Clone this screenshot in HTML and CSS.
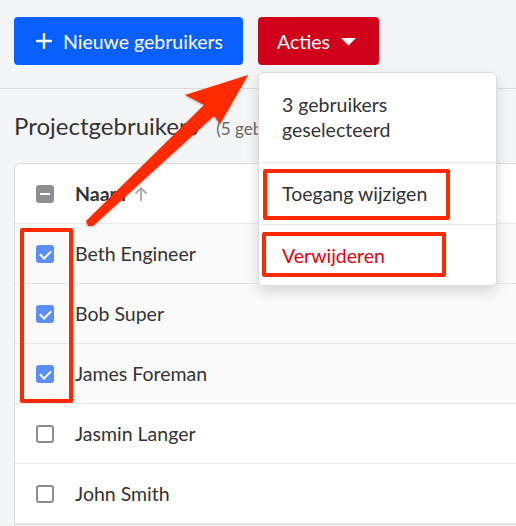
FILE: index.html
```html
<!DOCTYPE html>
<html lang="nl">
<head>
    <meta charset="UTF-8">
    <title>Projectgebruikers</title>
    <link rel="stylesheet" href="styles.css">
</head>
<body>

    <!-- toolbar -->
    <div class="toolbar">
        <button class="btn btn-primary">
            <svg class="plus" width="16" height="16" viewBox="0 0 16 16"><path d="M8 1v14M1 8h14" stroke="#fff" stroke-width="2.4" stroke-linecap="round"/></svg>
            Nieuwe gebruikers
        </button>
        <button class="btn btn-danger">
            Acties
            <svg class="caret" width="15" height="8" viewBox="0 0 15 8"><path d="M0 0h15L7.5 7.5z" fill="#fff"/></svg>
        </button>
    </div>

    <div class="content">
        <h2 class="title">Projectgebruikers <span class="count">(5 gebruikers)</span></h2>

        <div class="card">
            <div class="row row-head">
                <span class="check check-mixed"></span>
                <span class="name">Naam</span>
                <svg class="sort" width="14" height="16" viewBox="0 0 14 16"><path d="M7 15V2M1.5 7.5L7 2l5.5 5.5" stroke="#a8a8ad" stroke-width="1.8" fill="none"/></svg>
            </div>
            <div class="row selected"><span class="check checked"></span><span class="name">Beth Engineer</span></div>
            <div class="row selected"><span class="check checked"></span><span class="name">Bob Super</span></div>
            <div class="row selected"><span class="check checked"></span><span class="name">James Foreman</span></div>
            <div class="row"><span class="check"></span><span class="name">Jasmin Langer</span></div>
            <div class="row"><span class="check"></span><span class="name">John Smith</span></div>
        </div>
    </div>

    <!-- dropdown menu -->
    <div class="menu">
        <div class="menu-info">3 gebruikers geselecteerd</div>
        <div class="menu-item">Toegang wijzigen</div>
        <div class="menu-item menu-delete">Verwijderen</div>
    </div>

    <!-- annotations -->
    <div class="mark mark-checks"></div>
    <div class="mark mark-access"></div>
    <div class="mark mark-delete"></div>
    <svg class="arrow" width="516" height="526" viewBox="0 0 516 526">
        <polygon points="248,75 185,95 204,105 86,221 88,226 93,226 214,116 220,124" fill="#ff2a00"/>
    </svg>

</body>
</html>
```

FILE: styles.css
```css
* {
    margin: 0;
    padding: 0;
    box-sizing: border-box;
    font-family: Lato, "Open Sans", sans-serif;
}

body {
    background-color: #f4f5f7;
    color: #333;
    width: 516px;
    height: 526px;
    overflow: hidden;
    position: relative;
}

.toolbar {
    display: flex;
    gap: 15px;
    padding: 17px 14px 0;
    height: 89px;
    border-bottom: 1px solid #d9dadd;
}

.btn {
    height: 48px;
    border: none;
    border-radius: 4px;
    color: white;
    font-size: 19.5px;
    display: flex;
    align-items: center;
    cursor: pointer;
}

.btn-primary {
    background: #0a60ff;
    padding: 0 18px 0 22px;
    gap: 11px;
    width: 229px;
}

.btn-danger {
    background: #d0021b;
    padding: 0 20px 0 19px;
    gap: 11px;
    width: 121px;
}

.caret {
    margin-top: 1px;
}

.content {
    padding: 22px 0 0 14px;
}

.title {
    font-size: 24px;
    line-height: 29px;
    font-weight: normal;
    color: #333;
    height: 52px;
}

.count {
    font-size: 17px;
    color: #666;
    margin-left: 12px;
}

.card {
    background: white;
    border: 1px solid #dadada;
    border-right: none;
    border-radius: 6px 0 0 0;
    margin-right: -20px;
}

.row {
    height: 60px;
    display: flex;
    align-items: center;
    padding-left: 21px;
    border-bottom: 1px solid #e8e8e8;
}

.row.selected {
    background: #fafafa;
}

.check {
    width: 18px;
    height: 18px;
    border: 2px solid #8c8c91;
    border-radius: 3px;
    background: white;
    margin-right: 21px;
    position: relative;
}

.check.checked {
    background: #5b8ef8;
    border-color: #5b8ef8;
}

.check.checked::after {
    content: "";
    position: absolute;
    left: 4px;
    top: 1px;
    width: 5px;
    height: 9px;
    border: solid white;
    border-width: 0 2px 2px 0;
    transform: rotate(45deg);
}

.check-mixed {
    background: #8e8e93;
    border-color: #8e8e93;
}

.check-mixed::after {
    content: "";
    position: absolute;
    left: 2px;
    top: 6px;
    width: 10px;
    height: 2px;
    background: white;
}

.name {
    font-size: 19.5px;
    color: #333;
}

.row-head .name {
    font-weight: bold;
    margin-right: 8px;
}

/* dropdown */
.menu {
    position: absolute;
    left: 258px;
    top: 72px;
    width: 239px;
    background: white;
    border: 1px solid #dcdcdc;
    border-radius: 5px;
    box-shadow: 0 6px 14px rgba(0, 0, 0, 0.14);
    font-size: 19.5px;
}

.menu-info {
    padding: 19px 23px 20px;
    line-height: 25px;
    border-bottom: 1px solid #e6e6e6;
}

.menu-item {
    height: 61px;
    display: flex;
    align-items: center;
    padding-left: 23px;
}

.menu-item + .menu-item {
    border-top: 1px solid #e6e6e6;
}

.menu-delete {
    color: #e60012;
}

/* annotations */
.mark {
    position: absolute;
    border: 4px solid #ff2a00;
    border-radius: 2px;
}

.mark-checks {
    left: 20px;
    top: 228px;
    width: 53px;
    height: 175px;
}

.mark-access {
    left: 263px;
    top: 169px;
    width: 187px;
    height: 51px;
}

.mark-delete {
    left: 262px;
    top: 232px;
    width: 184px;
    height: 45px;
}

.arrow {
    position: absolute;
    left: 0;
    top: 0;
    pointer-events: none;
    filter: drop-shadow(0 1px 1px rgba(0, 0, 0, 0.25));
}
```
